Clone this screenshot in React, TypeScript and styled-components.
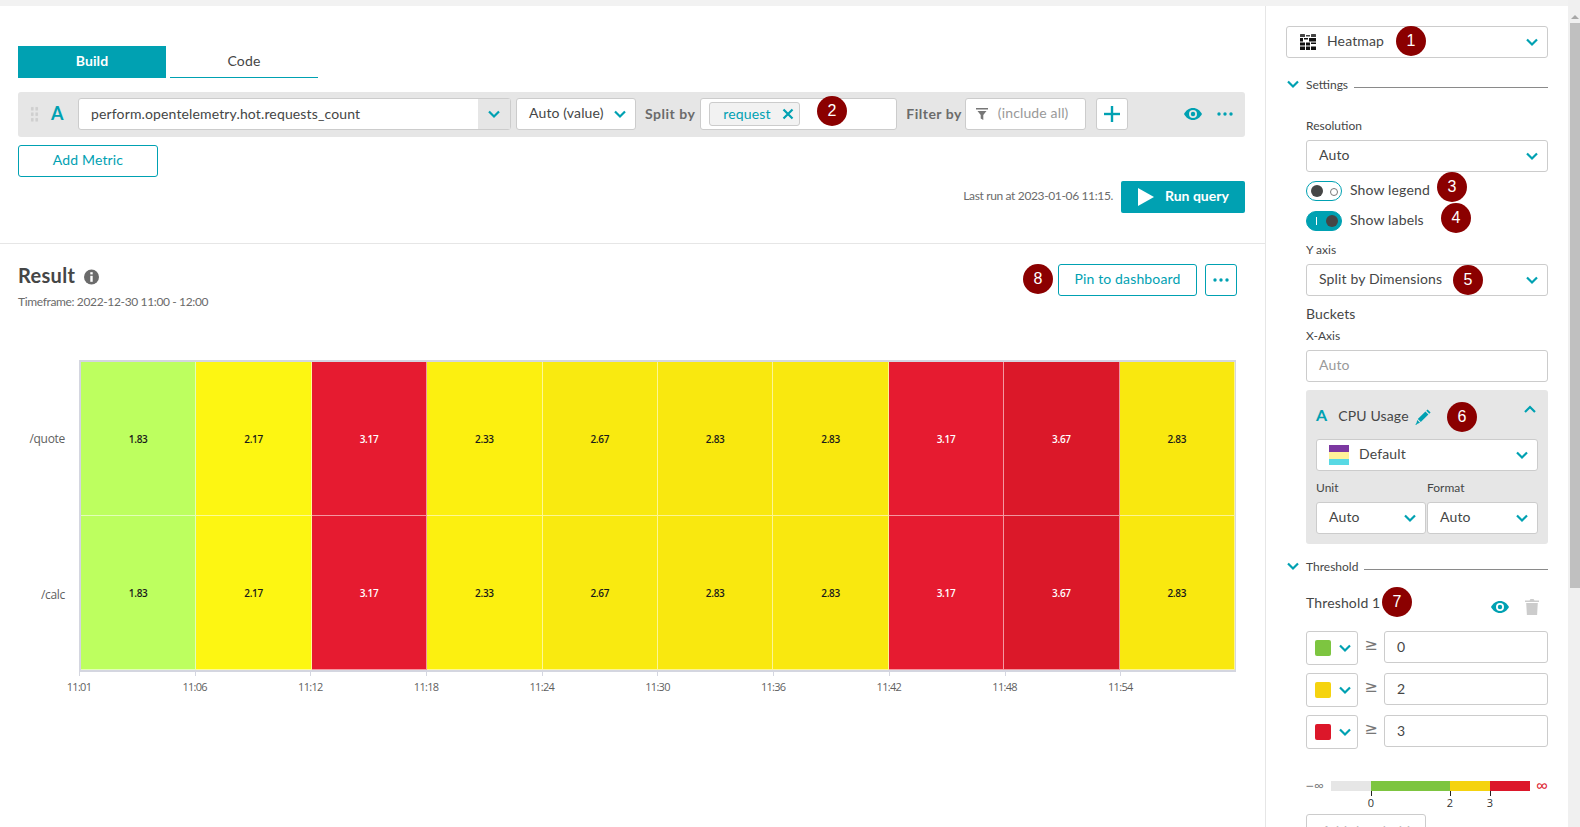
import { type ReactNode } from "react";
import styled, { createGlobalStyle } from "styled-components";

const TEAL = "#00a1b2";
const TEXT = "#454646";
const LINE = "#cccccc";

const Global = createGlobalStyle`
  html, body { margin: 0; padding: 0; background: #fff; }
  body { font-family: Lato, "Open Sans", sans-serif; font-size: 14px; letter-spacing: 0.14px; color: ${TEXT}; }
  * { box-sizing: border-box; }
`;

const Page = styled.div`
  position: relative;
  width: 1580px;
  height: 827px;
  overflow: hidden;
  display: grid;
  grid-template-columns: 1266px 302px 12px;
  grid-template-rows: 6px 821px;
`;

const TopBand = styled.div`
  grid-column: 1 / 3;
  background: #f2f2f2;
`;

const Main = styled.main`
  grid-column: 1;
  grid-row: 2;
  border-right: 1px solid #e6e6e6;
`;

const Builder = styled.section`
  padding: 40px 20px 30px 18px;
  border-bottom: 1px solid #e6e6e6;
`;

const Tabs = styled.div`
  display: flex;
  gap: 4px;
`;

const Tab = styled.div<{ $active?: boolean }>`
  width: 148px;
  height: 32px;
  padding-bottom: 2px;
  display: flex;
  align-items: center;
  justify-content: center;
  font-weight: ${(p) => (p.$active ? 700 : 400)};
  color: ${(p) => (p.$active ? "#fff" : TEXT)};
  background: ${(p) => (p.$active ? TEAL : "#fff")};
  border-bottom: 1px solid ${TEAL};
`;

const QueryRow = styled.div`
  margin-top: 14px;
  height: 45px;
  padding: 0 12px 1px 12px;
  display: flex;
  align-items: center;
  background: #e6e6e6;
  border-radius: 3px;
`;

const Grip = styled.div`
  width: 9px;
  height: 16px;
  margin-right: 12px;
  background: radial-gradient(circle, #cfcfcf 1.6px, transparent 1.8px) 0 0 / 4.5px 5.5px;
`;

const Letter = styled.span`
  margin-top: -2px;
  color: ${TEAL};
  font-size: 18px;
  font-weight: 700;
  line-height: 1;
  width: 27px;
`;

const Field = styled.div<{ $width?: number; $muted?: boolean }>`
  width: ${(p) => (p.$width ? `${p.$width}px` : "auto")};
  flex: none;
  height: 32px;
  padding: 0 0 3px 12px;
  display: flex;
  align-items: center;
  background: #fff;
  border: 1px solid ${LINE};
  border-radius: 3px;
  color: ${(p) => (p.$muted ? "#999" : TEXT)};
  white-space: nowrap;
`;

const MetricField = styled(Field)`
  width: 433px;
  padding: 0 0 0 12px;
  justify-content: space-between;
`;

const MetricName = styled.span`
  margin-top: -1px;
`;

const ChevronSlot = styled.div`
  width: 32px;
  height: 30px;
  display: flex;
  align-items: center;
  justify-content: center;
  background: #e6e6e6;
`;

const RowLabel = styled.span<{ $ml: number; $mr: number }>`
  margin: -2px ${(p) => p.$mr}px 0 ${(p) => p.$ml}px;
  color: #6b6b6b;
  font-weight: 700;
  letter-spacing: 0.5px;
  white-space: nowrap;
`;

const Tag = styled.span`
  width: 91px;
  height: 24px;
  padding: 0 5px 2px 13px;
  display: flex;
  align-items: center;
  justify-content: space-between;
  color: ${TEAL};
  background: #f2f2f2;
  border: 1px solid ${LINE};
  border-radius: 3px;

  svg {
    margin-top: 2px;
  }
`;

const SplitField = styled(Field)`
  padding: 0 0 0 8px;
`;

const FilterField = styled(Field)`
  padding-left: 10px;
  gap: 10px;

  svg {
    margin-top: 3px;
  }
`;

const PlusButton = styled.div`
  width: 32px;
  height: 32px;
  margin-left: 10px;
  display: flex;
  align-items: center;
  justify-content: center;
  background: #fff;
  border: 1px solid ${LINE};
  border-radius: 3px;
`;

const RowEnd = styled.div`
  margin-left: auto;
  display: flex;
  align-items: center;
  gap: 15px;
`;

const OutlineButton = styled.div<{ $width: number }>`
  width: ${(p) => p.$width}px;
  height: 32px;
  padding-bottom: 3px;
  display: flex;
  align-items: center;
  justify-content: center;
  color: ${TEAL};
  background: #fff;
  border: 1px solid ${TEAL};
  border-radius: 3px;

  svg {
    margin-top: 3px;
  }
`;

const AddMetric = styled(OutlineButton)`
  margin-top: 8px;
`;

const RunRow = styled.div`
  margin-top: 4px;
  display: flex;
  align-items: center;
  justify-content: flex-end;
  gap: 8px;
  font-size: 12px;
  letter-spacing: -0.36px;
  color: #6b6b6b;
`;

const LastRun = styled.span`
  margin-top: -3px;
`;

const RunButton = styled.div`
  width: 124px;
  height: 32px;
  padding: 0 0 3px 17px;
  display: flex;
  align-items: center;
  gap: 11px;
  font-size: 14px;
  font-weight: 700;
  letter-spacing: 0;
  color: #fff;
  background: ${TEAL};
  border-radius: 2px;

  svg {
    margin-top: 3px;
  }
`;

const Result = styled.section`
  padding: 20px 28px 0 18px;
`;

const ResultHead = styled.div`
  display: flex;
  justify-content: space-between;
`;

const Title = styled.h2`
  margin: -1px 0 0;
  height: 24px;
  display: flex;
  align-items: center;
  gap: 9px;
  font-size: 20px;
  font-weight: 700;
  letter-spacing: 0.3px;
  color: #454646;

  svg {
    margin-top: 3px;
  }
`;

const Timeframe = styled.div`
  margin-top: 7px;
  font-size: 12px;
  line-height: 16px;
  letter-spacing: -0.36px;
  color: #6b6b6b;
`;

const Actions = styled.div`
  display: flex;
  gap: 8px;
`;

const Chart = styled.div`
  margin-top: 50px;
  display: grid;
  grid-template-columns: 61px 1157px;
  grid-template-rows: 312px 30px;
  font-family: "Open Sans", sans-serif;
  letter-spacing: 0;
`;

const YAxis = styled.div`
  display: grid;
  grid-template-rows: 1fr 1fr;
  padding-right: 14px;
  font-size: 12px;
  letter-spacing: -0.3px;
  color: #5f5f5f;
  text-align: right;
  align-items: center;
`;

const Plot = styled.div`
  display: grid;
  grid-template-columns: repeat(10, 1fr);
  grid-template-rows: 1fr 1fr;
  border: 2px solid #d4d6e0;
  border-right-width: 1px;
`;

const Cell = styled.div<{ $bg: string; $light?: boolean }>`
  display: flex;
  align-items: center;
  justify-content: center;
  font-size: 10px;
  font-weight: 600;
  letter-spacing: -0.3px;
  color: ${(p) => (p.$light ? "#fff" : "#1a1a1a")};
  background: ${(p) => p.$bg};
  border-right: 1px solid rgba(255, 255, 255, 0.55);
  border-bottom: 1px solid rgba(255, 255, 255, 0.55);
`;

const XAxis = styled.div`
  grid-column: 2;
  display: grid;
  grid-template-columns: repeat(10, 1fr);
  font-size: 11px;
  letter-spacing: -0.7px;
  color: #5f5f5f;
`;

const Tick = styled.div`
  position: relative;
  padding-top: 7px;

  &::before {
    content: "";
    position: absolute;
    left: 0;
    top: 0;
    width: 1px;
    height: 4px;
    background: #d4d6e0;
  }

  span {
    display: inline-block;
    transform: translateX(-50%);
  }
`;

const Sidebar = styled.aside`
  grid-column: 2;
  grid-row: 2;
  padding: 20px 20px 0;
`;

const Select = styled(Field)`
  justify-content: space-between;
  padding-right: 8px;

  > svg {
    margin-top: 3px;
  }
`;

const AutoValue = styled(Select)`
  margin-left: 5px;
`;

const SelectValue = styled.span`
  display: flex;
  align-items: center;
  gap: 10px;

  svg {
    margin-top: 3px;
  }
`;

const HeatmapSelect = styled(Select)`
  padding-left: 13px;

  ${SelectValue} {
    gap: 11px;
  }
`;

const SectionHead = styled.div<{ $mt: number }>`
  margin-top: ${(p) => p.$mt}px;
  height: 16px;
  display: flex;
  align-items: center;
  gap: 6px;
  font-size: 12px;
  letter-spacing: 0;

  &::after {
    content: "";
    flex: 1;
    height: 1px;
    margin-top: 6px;
    background: #8a8a8a;
  }
`;

const Indented = styled.div`
  padding-left: 20px;
`;

const Label = styled.div<{ $mt: number }>`
  margin-top: ${(p) => p.$mt}px;
  margin-bottom: 6px;
  height: 16px;
  line-height: 16px;
  font-size: 12px;
  letter-spacing: 0;
`;

const ToggleRow = styled.div<{ $mt: number }>`
  margin-top: ${(p) => p.$mt}px;
  height: 20px;
  padding-bottom: 3px;
  display: flex;
  align-items: center;
  gap: 8px;
`;

const Toggle = styled.div<{ $on?: boolean }>`
  position: relative;
  width: 36px;
  height: 20px;
  margin-top: 3px;
  flex: none;
  border-radius: 10px;
  border: 1px solid ${TEAL};
  background: ${(p) => (p.$on ? TEAL : "#fff")};

  &::before {
    content: "";
    position: absolute;
    top: 3px;
    left: ${(p) => (p.$on ? "19px" : "4px")};
    width: 12px;
    height: 12px;
    border-radius: 50%;
    background: #454646;
  }

  &::after {
    content: "";
    position: absolute;
    top: ${(p) => (p.$on ? "5px" : "6px")};
    left: ${(p) => (p.$on ? "9px" : "23px")};
    width: ${(p) => (p.$on ? "1px" : "6px")};
    height: ${(p) => (p.$on ? "8px" : "6px")};
    background: ${(p) => (p.$on ? "#fff" : "transparent")};
    border: ${(p) => (p.$on ? "none" : "1px solid #777")};
    border-radius: ${(p) => (p.$on ? "0" : "50%")};
  }
`;

const BucketsTitle = styled.div`
  margin-top: 9px;
  height: 18px;
  line-height: 18px;
`;

const Panel = styled.div`
  margin-top: 8px;
  padding: 0 10px 10px;
  background: #e6e6e6;
  border-radius: 3px;
`;

const PanelHead = styled.div`
  height: 49px;
  padding-top: 2px;
  display: flex;
  align-items: center;
  gap: 11px;
`;

const PanelLetter = styled(Letter)`
  width: auto;
  font-size: 16px;
`;

const EditIcon = styled.span`
  margin: 2px 0 0 -5px;
  display: flex;
`;

const PanelChevron = styled.div`
  margin-left: auto;
  margin-top: -14px;
  margin-right: 1px;
  display: flex;
`;

const Swatch = styled.div`
  width: 20px;
  height: 20px;
  margin-top: 3px;
  background: linear-gradient(#7c38a1 0 7px, #fff29a 7px 14px, #58d9e4 14px);
`;

const UnitGrid = styled.div`
  margin-top: 9px;
  display: grid;
  grid-template-columns: 110px 111px;
  column-gap: 1px;
`;

const ThresholdHead = styled.div`
  margin-top: 18px;
  height: 20px;
  padding-right: 9px;
  display: flex;
  align-items: center;
`;

const ThresholdIcons = styled.div`
  margin-left: auto;
  margin-top: 9px;
  display: flex;
  align-items: center;
  gap: 16px;
`;

const ThresholdRows = styled.div`
  margin-top: 19px;
  display: flex;
  flex-direction: column;
  gap: 8px;
`;

const ThresholdRow = styled.div`
  display: flex;
  align-items: flex-start;
  height: 34px;
`;

const ColorBox = styled.div`
  width: 52px;
  height: 34px;
  padding: 0 5px 0 8px;
  display: flex;
  align-items: center;
  justify-content: space-between;
  border: 1px solid ${LINE};
  border-radius: 3px;
`;

const ColorChip = styled.div<{ $color: string }>`
  width: 16px;
  height: 16px;
  border-radius: 2px;
  background: ${(p) => p.$color};
`;

const Gte = styled.span`
  width: 26px;
  margin-top: 4px;
  text-align: center;
  font-family: "DejaVu Sans", sans-serif;
  font-size: 16px;
  color: #777;
`;

const ValueInput = styled(Field)`
  flex: 1;
  padding-bottom: 1px;
`;

const Legend = styled.div`
  margin-top: 32px;
  height: 33px;
  display: flex;
  font-family: "Open Sans", sans-serif;
  letter-spacing: 0;
  line-height: 10px;
`;

const LegendEnd = styled.span<{ $color: string; $w: number; $size: number }>`
  flex: none;
  width: ${(p) => p.$w}px;
  font-size: ${(p) => p.$size}px;
  color: ${(p) => p.$color};
  white-space: nowrap;
`;

const LegendBar = styled.div`
  flex: none;
  width: 199px;
  height: 10px;
  margin-right: 6px;
  display: flex;
`;

const Segment = styled.div<{ $color: string; $w: number }>`
  position: relative;
  width: ${(p) => p.$w}px;
  background: ${(p) => p.$color};
`;

const SegmentTick = styled.span`
  position: absolute;
  left: 0;
  top: 10px;
  width: 1px;
  height: 5px;
  background: #222;

  b {
    position: absolute;
    top: 7px;
    left: 0;
    transform: translateX(-50%);
    font-weight: 400;
    font-size: 11px;
    color: #333;
  }
`;

const AddThreshold = styled.div`
  width: 120px;
  height: 32px;
  display: flex;
  align-items: center;
  justify-content: center;
  color: #bbb;
  border: 1px solid ${LINE};
  border-radius: 3px;
`;

const Scrollbar = styled.div`
  grid-column: 3;
  grid-row: 1 / 3;
  background: #f0f0f0;
  padding: 15px 0 0 2px;
`;

const ScrollArrow = styled.div`
  width: 0;
  height: 0;
  margin: 0 0 4px 1px;
  border: 4px solid transparent;
  border-top: 0;
  border-bottom: 4px solid #a8a8a8;
`;

const ScrollThumb = styled.div`
  height: 565px;
  background: #c0c0c0;
`;

const Badge = styled.div<{ $x: number; $y: number }>`
  position: absolute;
  left: ${(p) => p.$x - 15}px;
  top: ${(p) => p.$y - 15}px;
  width: 30px;
  height: 30px;
  display: flex;
  align-items: center;
  justify-content: center;
  border-radius: 50%;
  font-family: "Liberation Sans", sans-serif;
  font-size: 16px;
  letter-spacing: 0;
  color: #fff;
  background: #8b0000;
`;

const Chevron = ({ up }: { up?: boolean }) => (
  <svg width="14" height="10" viewBox="0 0 14 10" fill="none">
    <path d={up ? "M2 8l5-5 5 5" : "M2 2.5l5 5 5-5"} stroke={TEAL} strokeWidth="2.2" />
  </svg>
);

const Eye = () => (
  <svg width="18" height="12" viewBox="0 0 18 12">
    <path fill={TEAL} fillRule="evenodd" d="M9 0c4 0 7.200 2.600 9 6-1.800 3.400-5 6-9 6s-7.200-2.600-9-6c1.800-3.400 5-6 9-6zm0 2a4 4 0 100 8 4 4 0 000-8z" />
    <circle cx="9" cy="6" r="2.200" fill={TEAL} />
  </svg>
);

const Dots = () => (
  <svg width="16" height="4" viewBox="0 0 16 4" fill={TEAL}>
    <circle cx="2" cy="2" r="1.700" />
    <circle cx="8" cy="2" r="1.700" />
    <circle cx="14" cy="2" r="1.700" />
  </svg>
);

const Cross = () => (
  <svg width="12" height="12" viewBox="0 0 12 12">
    <path d="M1.500 1.500l9 9M10.500 1.500l-9 9" stroke={TEAL} strokeWidth="2.200" />
  </svg>
);

const Plus = () => (
  <svg width="16" height="16" viewBox="0 0 16 16" fill={TEAL}>
    <rect x="6.800" y="0" width="2.400" height="16" />
    <rect x="0" y="6.800" width="16" height="2.400" />
  </svg>
);

const Funnel = () => (
  <svg width="12" height="12" viewBox="0 0 12 12" fill="#777">
    <path d="M0 0h12v1.500H0zM1.500 3h9L7.300 7v5l-2.600-1.500V7z" />
  </svg>
);

const Play = () => (
  <svg width="16" height="18" viewBox="0 0 16 18" fill="#fff">
    <path d="M0 0l16 9-16 9z" />
  </svg>
);

const Info = () => (
  <svg width="15" height="16" viewBox="0 0 15 16">
    <circle cx="7.500" cy="8" r="7.500" fill="#6b6b6b" />
    <rect x="6.300" y="6.800" width="2.400" height="6" fill="#fff" />
    <rect x="6.300" y="3.200" width="2.400" height="2.200" fill="#fff" />
  </svg>
);

const HeatIcon = () => (
  <svg width="16" height="16" viewBox="0 0 16 16" fill="#111">
    <rect x="0" y="0" width="5" height="3" rx="0.500" fill="#444" />
    <rect x="6" y="1" width="4" height="1.500" fill="#444" />
    <rect x="11" y="0" width="5" height="3" rx="0.500" fill="#444" />
    <rect x="0" y="4" width="3" height="3.500" />
    <rect x="4" y="4" width="4" height="1.500" />
    <rect x="9" y="4" width="7" height="3.500" />
    <rect x="0" y="8.500" width="5" height="3" />
    <rect x="6" y="8.500" width="4" height="3" />
    <rect x="11" y="8.500" width="5" height="1.500" />
    <rect x="0" y="12.500" width="5" height="3.500" />
    <rect x="6" y="12.500" width="4" height="3.500" />
    <rect x="11" y="12.500" width="5" height="3.500" />
  </svg>
);

const Pencil = () => (
  <svg width="16" height="16" viewBox="0 0 16 16" fill={TEAL}>
    <path d="M12.600 0.400l3 3-1.300 1.300-3-3zM10.400 2.600l3 3-7.600 7.500-3-3zM2.200 11l2.800 2.800-2.500 1-1.500 1.200-0.600-0.600 1.100-1.500z" />
  </svg>
);

const Trash = () => (
  <svg width="14" height="17" viewBox="0 0 14 17" fill="#cccccc">
    <path d="M0 2.500h4.500L5.500 1h3l1 1.500H14V4H0zM1.200 5h11.600l-0.700 12H1.900z" />
  </svg>
);

const cols = [
  { value: "1.83", bg: "#bdff5f" },
  { value: "2.17", bg: "#fdf612" },
  { value: "3.17", bg: "#e61b30", light: true },
  { value: "2.33", bg: "#fcf010" },
  { value: "2.67", bg: "#f9ea10" },
  { value: "2.83", bg: "#f9e80f" },
  { value: "2.83", bg: "#f9e80f" },
  { value: "3.17", bg: "#e61b30", light: true },
  { value: "3.67", bg: "#db1829", light: true },
  { value: "2.83", bg: "#f9e80f" },
];

const times = ["11:01", "11:06", "11:12", "11:18", "11:24", "11:30", "11:36", "11:42", "11:48", "11:54"];

const thresholds = [
  { color: "#7dc540", value: "0" },
  { color: "#f5d30f", value: "2" },
  { color: "#dc172a", value: "3" },
];

const badges = [
  { n: 1, x: 1411, y: 41 },
  { n: 2, x: 832, y: 111 },
  { n: 3, x: 1452, y: 187 },
  { n: 4, x: 1456, y: 218 },
  { n: 5, x: 1468, y: 280 },
  { n: 6, x: 1462, y: 417 },
  { n: 7, x: 1397, y: 602 },
  { n: 8, x: 1038, y: 279 },
];

const SelectBox = ({ children }: { children: ReactNode }) => (
  <Select>
    <SelectValue>{children}</SelectValue>
    <Chevron />
  </Select>
);

export default function App() {
  return (
    <Page>
      <Global />
      <TopBand />
      <Main>
        <Builder>
          <Tabs>
            <Tab $active>Build</Tab>
            <Tab>Code</Tab>
          </Tabs>
          <QueryRow>
            <Grip />
            <Letter>A</Letter>
            <MetricField>
              <MetricName>perform.opentelemetry.hot.requests_count</MetricName>
              <ChevronSlot>
                <Chevron />
              </ChevronSlot>
            </MetricField>
            <AutoValue $width={120}>
              Auto (value)
              <Chevron />
            </AutoValue>
            <RowLabel $ml={9} $mr={5}>Split by</RowLabel>
            <SplitField $width={197}>
              <Tag>
                request
                <Cross />
              </Tag>
            </SplitField>
            <RowLabel $ml={9} $mr={3}>Filter by</RowLabel>
            <FilterField $width={121} $muted>
              <Funnel />
              (include all)
            </FilterField>
            <PlusButton>
              <Plus />
            </PlusButton>
            <RowEnd>
              <Eye />
              <Dots />
            </RowEnd>
          </QueryRow>
          <AddMetric $width={140}>Add Metric</AddMetric>
          <RunRow>
            <LastRun>Last run at 2023-01-06 11:15.</LastRun>
            <RunButton>
              <Play />
              Run query
            </RunButton>
          </RunRow>
        </Builder>
        <Result>
          <ResultHead>
            <div>
              <Title>
                Result
                <Info />
              </Title>
              <Timeframe>Timeframe: 2022-12-30 11:00 - 12:00</Timeframe>
            </div>
            <Actions>
              <OutlineButton $width={139}>Pin to dashboard</OutlineButton>
              <OutlineButton $width={32}>
                <Dots />
              </OutlineButton>
            </Actions>
          </ResultHead>
          <Chart>
            <YAxis>
              <span>/quote</span>
              <span>/calc</span>
            </YAxis>
            <Plot>
              {[0, 1].flatMap((row) =>
                cols.map((c, i) => (
                  <Cell key={`${row}-${i}`} $bg={c.bg} $light={c.light}>
                    {c.value}
                  </Cell>
                )),
              )}
            </Plot>
            <XAxis>
              {times.map((t) => (
                <Tick key={t}>
                  <span>{t}</span>
                </Tick>
              ))}
            </XAxis>
          </Chart>
        </Result>
      </Main>
      <Sidebar>
        <HeatmapSelect>
          <SelectValue>
            <HeatIcon />
            Heatmap
          </SelectValue>
          <Chevron />
        </HeatmapSelect>
        <SectionHead $mt={18}>
          <Chevron />
          Settings
        </SectionHead>
        <Indented>
          <Label $mt={26}>Resolution</Label>
          <SelectBox>Auto</SelectBox>
          <ToggleRow $mt={9}>
            <Toggle />
            Show legend
          </ToggleRow>
          <ToggleRow $mt={10}>
            <Toggle $on />
            Show labels
          </ToggleRow>
          <Label $mt={11}>Y axis</Label>
          <SelectBox>Split by Dimensions</SelectBox>
          <BucketsTitle>Buckets</BucketsTitle>
          <Label $mt={5}>X-Axis</Label>
          <Field $muted>Auto</Field>
          <Panel>
            <PanelHead>
              <PanelLetter>A</PanelLetter>
              CPU Usage
              <EditIcon>
                <Pencil />
              </EditIcon>
              <PanelChevron>
                <Chevron up />
              </PanelChevron>
            </PanelHead>
            <SelectBox>
              <Swatch />
              Default
            </SelectBox>
            <UnitGrid>
              <div>
                <Label $mt={0}>Unit</Label>
                <SelectBox>Auto</SelectBox>
              </div>
              <div>
                <Label $mt={0}>Format</Label>
                <SelectBox>Auto</SelectBox>
              </div>
            </UnitGrid>
          </Panel>
        </Indented>
        <SectionHead $mt={14}>
          <Chevron />
          Threshold
        </SectionHead>
        <Indented>
          <ThresholdHead>
            Threshold 1
            <ThresholdIcons>
              <Eye />
              <Trash />
            </ThresholdIcons>
          </ThresholdHead>
          <ThresholdRows>
            {thresholds.map((t) => (
              <ThresholdRow key={t.value}>
                <ColorBox>
                  <ColorChip $color={t.color} />
                  <Chevron />
                </ColorBox>
                <Gte>≥</Gte>
                <ValueInput>{t.value}</ValueInput>
              </ThresholdRow>
            ))}
          </ThresholdRows>
          <Legend>
            <LegendEnd $color="#777" $w={25} $size={14}>−∞</LegendEnd>
            <LegendBar>
              <Segment $color="#e6e6e6" $w={40} />
              <Segment $color="#7dc540" $w={79}>
                <SegmentTick><b>0</b></SegmentTick>
              </Segment>
              <Segment $color="#f5d30f" $w={40}>
                <SegmentTick><b>2</b></SegmentTick>
              </Segment>
              <Segment $color="#dc172a" $w={40}>
                <SegmentTick><b>3</b></SegmentTick>
              </Segment>
            </LegendBar>
            <LegendEnd $color="#dc172a" $w={12} $size={17}>∞</LegendEnd>
          </Legend>
          <AddThreshold>Add threshold</AddThreshold>
        </Indented>
      </Sidebar>
      <Scrollbar>
        <ScrollArrow />
        <ScrollThumb />
      </Scrollbar>
      {badges.map((b) => (
        <Badge key={b.n} $x={b.x} $y={b.y}>
          {b.n}
        </Badge>
      ))}
    </Page>
  );
}
